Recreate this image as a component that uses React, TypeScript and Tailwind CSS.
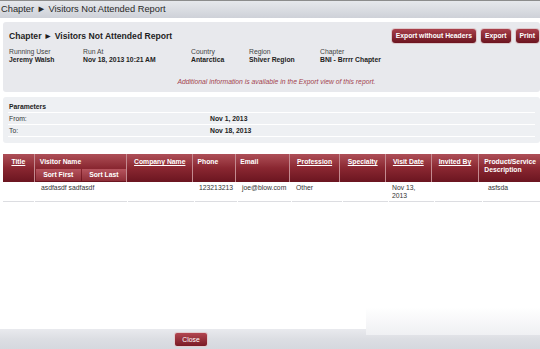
import React from "react";

type Col = {
  label: string;
  width: string;
  sortable?: boolean;
  pad?: string;
};

const columns: Col[] = [
  { label: "Title", width: "w-[31px]", sortable: true },
  { label: "Visitor Name", width: "w-[92px]", pad: "pl-[5px]" },
  { label: "Company Name", width: "w-[66px]", sortable: true },
  { label: "Phone", width: "w-[42px]", pad: "pl-[4px]" },
  { label: "Email", width: "w-[53px]", pad: "pl-[4px]" },
  { label: "Profession", width: "w-[50px]", sortable: true },
  { label: "Specialty", width: "w-[45px]", sortable: true },
  { label: "Visit Date", width: "w-[45px]", sortable: true },
  { label: "Invited By", width: "w-[47px]", sortable: true },
  { label: "Product/Service Description", width: "flex-1", pad: "pl-[5px] pr-[4px]" },
];

const row = ["", "asdfasdf sadfasdf", "", "123213213", "joe@blow.com", "Other", "", "Nov 13, 2013", "", "asfsda"];

const info = [
  { label: "Running User", value: "Jeremy Walsh", width: "w-[74px]" },
  { label: "Run At", value: "Nov 18, 2013 10:21 AM", width: "w-[108px]" },
  { label: "Country", value: "Antarctica", width: "w-[58px]" },
  { label: "Region", value: "Shiver Region", width: "w-[71px]" },
  { label: "Chapter", value: "BNI - Brrrr Chapter", width: "" },
];

function RedButton({ children, className = "" }: { children: React.ReactNode; className?: string }) {
  return (
    <button
      type="button"
      className={`h-[14px] rounded-[3px] bg-linear-to-b from-[#a9404b] to-[#6c1420] px-[4px] text-[6.8px] leading-[14px] font-bold text-white shadow-[0_0_0_1px_#dcc8cb] ${className}`}
    >
      {children}
    </button>
  );
}

export default function App() {
  return (
    <div
      className="relative flex h-[349px] w-[540px] flex-col overflow-hidden bg-white text-[#333]"
      style={{ fontFamily: '"Liberation Sans", Arial, sans-serif' }}
    >
      {/* Window title */}
      <div className="flex h-[18px] shrink-0 items-center border-t border-[#8c8c8c] bg-linear-to-b from-[#e6e8ec] to-[#ced1d8] pl-px text-[9.3px] text-[#2a2a2a]">
        Chapter ► Visitors Not Attended Report
      </div>

      {/* Report header */}
      <div className="mt-[4px] ml-[3px] h-[70px] shrink-0 rounded-[3px] bg-[#e8e9ed] pt-[7px] pl-[6px]">
        <div className="flex items-start justify-between">
          <h1 className="pt-[2px] text-[8.6px] leading-[10px] font-bold text-[#1e1e1e]">
            Chapter ► Visitors Not Attended Report
          </h1>
          <div className="flex gap-[5px] pr-px">
            <RedButton>Export without Headers</RedButton>
            <RedButton>Export</RedButton>
            <RedButton>Print</RedButton>
          </div>
        </div>
        <div className="mt-[5px] flex">
          {info.map((i) => (
            <div key={i.label} className={`${i.width} text-[6.8px] leading-[8px]`}>
              <div className="text-[#444]">{i.label}</div>
              <div className="font-bold text-[#222]">{i.value}</div>
            </div>
          ))}
        </div>
        <p className="mt-[14px] pl-[4px] text-center text-[6.8px] leading-[8px] text-[#a3444e] italic">
          Additional information is available in the Export view of this report.
        </p>
      </div>

      {/* Parameters */}
      <div className="mt-[5px] ml-[3px] h-[46px] shrink-0 rounded-[3px] bg-[#eef0f3] px-[5px] pt-[4px] text-[6.8px] leading-[8px]">
        <div className="flex h-[12px] items-center border-b border-white pl-px font-bold text-[#222]">
          Parameters
        </div>
        <div className="flex h-[12px] items-center border-b border-white pl-px">
          <span className="w-[201px] text-[#333]">From:</span>
          <span className="font-bold text-[#222]">Nov 1, 2013</span>
        </div>
        <div className="flex h-[12px] items-center border-b border-white pl-px">
          <span className="w-[201px] text-[#333]">To:</span>
          <span className="font-bold text-[#222]">Nov 18, 2013</span>
        </div>
      </div>

      {/* Results table */}
      <div className="mt-[11px] ml-[3px] shrink-0">
        <div className="flex h-[28px] gap-x-px bg-[#c48a90] text-[6.8px] leading-[8px] font-bold text-white">
          {columns.map((c) =>
            c.label === "Visitor Name" ? (
              <div
                key={c.label}
                className={`${c.width} flex flex-col bg-linear-to-b from-[#ae4f58] via-[#8a2731] to-[#6b1520]`}
              >
                <div className="h-[14px] pt-[4px] pl-[5px]">{c.label}</div>
                <div className="mt-px flex gap-px pl-px">
                  <span className="h-[12px] w-[45px] bg-linear-to-b from-[#b6545e] to-[#8e2d37] text-center leading-[12px]">
                    Sort First
                  </span>
                  <span className="h-[12px] flex-1 bg-linear-to-b from-[#b6545e] to-[#8e2d37] text-center leading-[12px]">
                    Sort Last
                  </span>
                </div>
              </div>
            ) : (
              <div
                key={c.label}
                className={`${c.width} bg-linear-to-b from-[#ae4f58] via-[#8a2731] to-[#6b1520] pt-[4px] ${
                  c.sortable ? "text-center underline" : c.pad
                }`}
              >
                {c.label}
              </div>
            )
          )}
        </div>
        <div className="flex h-[20px] gap-x-px text-[6.8px] leading-[8px] text-[#333]">
          {columns.map((c, i) => (
            <div
              key={c.label}
              className={`${c.width} border-b border-[#dcdde1] pt-[2px] ${
                i === 1 ? "pl-[6px]" : i === 7 ? "pl-[3px] pr-[10px]" : i === 9 ? "pl-[5px]" : "pl-[4px]"
              }`}
            >
              {row[i]}
            </div>
          ))}
        </div>
      </div>

      <div className="flex-1" />

      {/* Footer */}
      <div className="flex h-[20px] shrink-0 items-center justify-start bg-linear-to-b from-[#e9eaee] via-[#dcdee3] to-[#d5d8de] pl-[175px]">
        <button
          type="button"
          className="h-[13px] w-[32px] rounded-[2px] bg-linear-to-b from-[#b24651] to-[#7a1a25] text-[6.8px] leading-[13px] text-white shadow-[0_0_0_1px_#e2cdd0]"
        >
          Close
        </button>
      </div>
      <div className="pointer-events-none absolute top-[307px] left-[366px] h-[28px] w-[174px] bg-linear-to-b from-white to-[#eff0f3]" />
    </div>
  );
}
